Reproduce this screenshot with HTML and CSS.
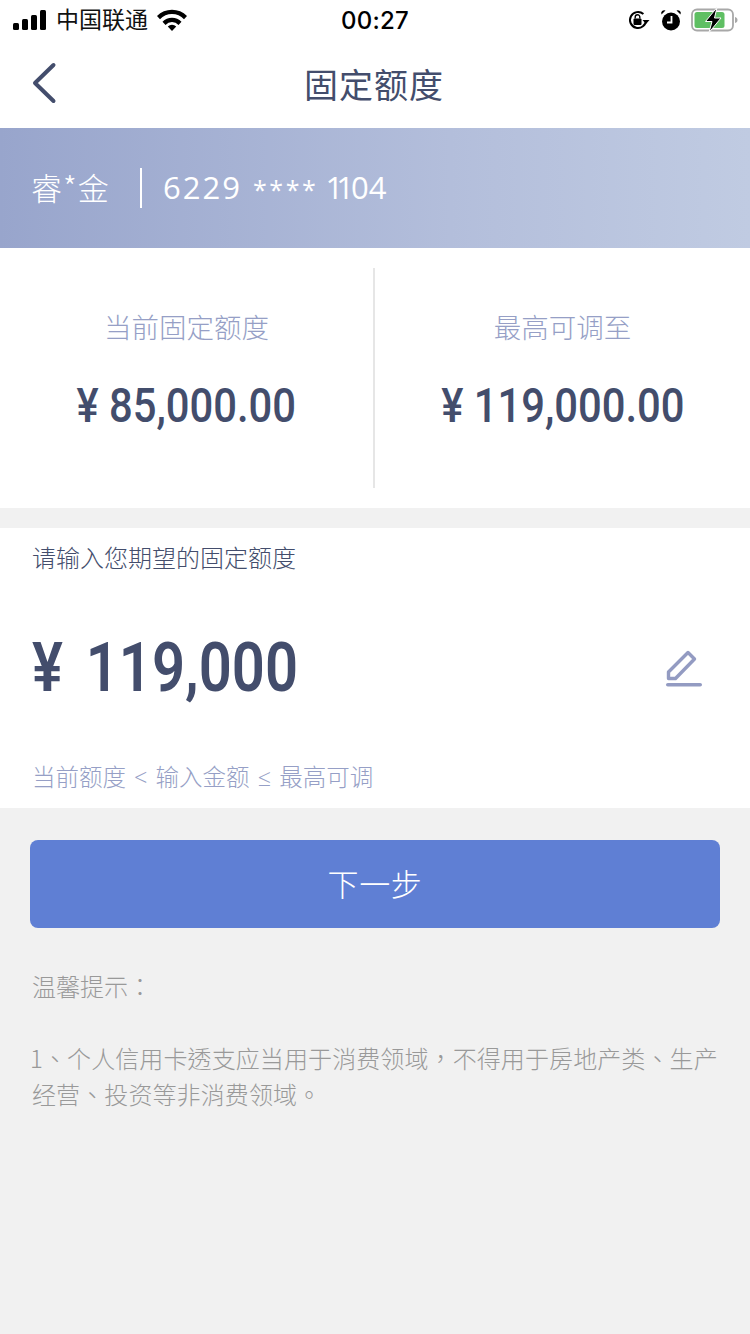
FILE: index.html
```html
<!DOCTYPE html>
<html lang="zh-CN">
<head>
<meta charset="utf-8">
<title>固定额度</title>
<link rel="stylesheet" href="styles.css">
</head>
<body>
<div class="page">
  <header class="status">
    <div class="status-left">
      <svg class="signal" width="34" height="20" viewBox="0 0 34 20"><rect x="0" y="13" width="6" height="7" rx="1.5"/><rect x="9" y="9" width="6" height="11" rx="1.5"/><rect x="18" y="5" width="6" height="15" rx="1.5"/><rect x="27" y="0" width="6" height="20" rx="1.5"/></svg>
      <span class="carrier">中国联通</span>
      <svg class="wifi" width="30" height="22" viewBox="0 0 30 22"><path d="M0 7a21 21 0 0 1 30 0l-3 3.200a16.500 16.500 0 0 0-24 0z"/><path d="M5.500 12.800a13 13 0 0 1 19 0l-3 3.100a8.800 8.800 0 0 0-13 0z"/><path d="M10.800 17.500a6 6 0 0 1 8.400 0L15 22z"/></svg>
    </div>
    <div class="clock">00:27</div>
    <div class="status-right">
      <svg width="24" height="22" viewBox="0 0 24 22"><path d="M19 11a8 8 0 1 1-2.600-5.900" fill="none" stroke="#000" stroke-width="2"/><path d="M15.500 11h7l-3.500 4z"/><rect x="6.500" y="9.500" width="8" height="6.500" rx="1"/><path d="M8.200 9.500V8a2.300 2.300 0 0 1 4.600 0v1.500" fill="none" stroke="#000" stroke-width="1.400"/></svg>
      <svg class="alarm" width="22" height="24" viewBox="0 0 22 24"><circle cx="11" cy="13.500" r="9"/><path d="M1.500 6.500 5.500 2.500a3 3 0 0 0-4 4zM20.500 6.500l-4-4a3 3 0 0 1 4 4z"/><path d="M11.500 8v6.500H7" fill="none" stroke="#fff" stroke-width="1.800"/></svg>
      <svg width="48" height="26" viewBox="0 0 48 26"><rect x="1" y="2.500" width="41" height="21" rx="5" fill="none" stroke="#a8a8a8" stroke-width="1.800"/><rect x="3.500" y="5" width="30" height="16" rx="2.500" fill="#5fbf63"/><path d="M44 10v6c1.800-.5 2.500-1.500 2.500-3s-.7-2.500-2.500-3z" fill="#a8a8a8"/><path d="M26 .5 14.500 14.500h6.500L18 25.500l12-14.500h-6.500z" stroke="#fff" stroke-width="1"/></svg>
    </div>
  </header>

  <nav class="nav">
    <svg class="back" width="26" height="42" viewBox="0 0 26 42"><path d="M22.500 3 4 21l18.500 18" fill="none" stroke="#434d6c" stroke-width="4" stroke-linecap="round" stroke-linejoin="round"/></svg>
    <h1 class="nav-title">固定额度</h1>
  </nav>

  <section class="card-band">
    <span class="holder">睿*金</span>
    <span class="card-no"><span class="no-digits">6229</span> <span class="no-stars">****</span> <span class="no-ones">11</span>04</span>
  </section>

  <section class="limits">
    <div class="limit">
      <div class="limit-label">当前固定额度</div>
      <div class="limit-value"><span class="din">¥ 85,000.00</span></div>
    </div>
    <div class="limit limit-split">
      <div class="limit-label">最高可调至</div>
      <div class="limit-value"><span class="din">¥ 119,000.00</span></div>
    </div>
  </section>

  <section class="entry">
    <div class="entry-label">请输入您期望的固定额度</div>
    <div class="entry-row">
      <span class="entry-amount">¥ 119,000</span>
      <svg class="edit" width="38" height="38" viewBox="0 0 38 38"><path d="M3.500 29.500V23L23 3.500l6.500 6.500L10.500 29.500z" fill="none" stroke="#939bc2" stroke-width="3.400" stroke-linejoin="round"/><rect x="1" y="34" width="36" height="3.600" rx="1.800" fill="#939bc2"/></svg>
    </div>
    <div class="entry-hint">当前额度 &lt; 输入金额 ≤ 最高可调</div>
  </section>

  <main class="lower">
    <button class="next" type="button">下一步</button>
    <p class="tip-title" lang="zh-TW">温馨提示：</p>
    <p class="tip-body" lang="zh-TW">1、个人信用卡透支应当用于消费领域，不得用于房地产类、生产经营、投资等非消费领域。</p>
  </main>
</div>
</body>
</html>
```

FILE: styles.css
```css
* { box-sizing: border-box; }

html, body { margin: 0; padding: 0; }

body {
  width: 750px;
  height: 1334px;
  overflow: hidden;
  background: #f1f1f1;
  font-family: "Noto Sans CJK SC", "Noto Sans", sans-serif;
  font-weight: 400;
}

.page { display: flex; flex-direction: column; height: 1334px; }

/* Status bar */
.status {
  height: 40px;
  background: #fff;
  display: grid;
  grid-template-columns: 1fr auto 1fr;
  align-items: center;
  padding: 0 11px 0 13px;
}
.status-left { display: flex; align-items: center; gap: 9px; }
.signal { fill: #000; }
.wifi { fill: #000; }
.carrier { font-size: 23px; line-height: 26px; height: 30px; color: #111; }
.clock { font-family: "Inter", "Roboto", sans-serif; font-size: 24px; font-weight: 500; color: #000; letter-spacing: .2px; margin-right: 2px; }
.status-right { display: flex; justify-content: flex-end; align-items: center; gap: 9px; }

/* Navigation */
.nav {
  height: 88px;
  background: #fff;
  display: flex;
  align-items: center;
  justify-content: center;
  position: relative;
}
.back { position: absolute; left: 31px; top: 22px; }
.nav-title { margin: 0; padding-right: 2px; font-size: 34px; line-height: 44px; font-weight: 400; color: #434d6c; letter-spacing: 1px; }

/* Card band */
.card-band {
  height: 120px;
  background: linear-gradient(90deg, #98a5cc 0%, #b3bedb 60%, #c0cbe2 100%);
  display: flex;
  align-items: center;
  padding-left: 31px;
  color: #fff;
}
.holder {
  font-size: 31px;
  font-weight: 300;
  width: 111px;
  height: 40px;
  line-height: 37px;
  border-right: 2px solid #fff;
  margin-right: 21px;
  letter-spacing: 1px;
  white-space: nowrap;
}
.card-no { font-family: "Open Sans", "Noto Sans", sans-serif; font-size: 31px; font-weight: 400; margin-top: -2px; white-space: pre; }
.no-digits { letter-spacing: 2px; }
.no-stars { font-size: 25px; letter-spacing: 2.600px; margin: 0 -1px 0 3px; }
.no-ones { letter-spacing: -7px; margin-right: 4px; }

/* Limit columns */
.limits {
  height: 260px;
  background: #fff;
  display: grid;
  grid-template-columns: 373px 377px;
  padding: 20px 0;
}
.limit { text-align: center; padding-top: 38px; height: 220px; }
.limit-split { border-left: 2px solid #e6e6e6; }
.limit-label { font-size: 27.500px; line-height: 40px; color: #969fc6; font-weight: 300; }
.limit-value {
  margin-top: 25px;
  font-size: 48px;
  line-height: 60px;
  color: #434d6c;
}
.din {
  display: inline-block;
  font-family: "Roboto", sans-serif;
  font-weight: 500;
  transform: scaleX(.87);
  white-space: nowrap;
}

/* Amount entry */
.entry { margin-top: 20px; height: 280px; background: #fff; padding: 0 32px; display: flex; flex-direction: column; }
.entry-label { font-size: 24px; line-height: 58px; color: #434d6c; height: 60px; font-weight: 300; }
.entry-row { height: 160px; display: flex; align-items: center; justify-content: space-between; padding-right: 15px; }
.entry-amount {
  display: inline-block;
  font-family: "Roboto", sans-serif;
  font-size: 69px;
  line-height: 80px;
  font-weight: 600;
  word-spacing: 10px;
  color: #434d6c;
  white-space: nowrap;
  transform: scaleX(.84);
  transform-origin: left center;
}
.edit { display: block; }
.entry-hint {
  font-family: "Open Sans", "Noto Sans CJK SC", sans-serif;
  font-size: 23.500px;
  line-height: 58px;
  height: 60px;
  color: #969fc6;
  font-weight: 300;
  word-spacing: 2px;
}

/* Button and notes */
.lower { flex: 1; padding: 32px 30px 0; }
.next {
  display: block;
  width: 100%;
  height: 88px;
  border: 0;
  border-radius: 8px;
  padding: 0 0 3px;
  background: #5f7fd4;
  color: #fff;
  font: inherit;
  font-size: 31px;
  font-weight: 300;
  letter-spacing: .6px;
}
.tip-title, .tip-body {
  font-family: "Noto Sans CJK TC", "Noto Sans CJK SC", sans-serif;
  font-size: 24px;
  font-weight: 300;
  color: #999;
  padding-left: 2px;
}
.tip-title { margin: 38px 0 0; line-height: 40px; }
.tip-body { margin: 34px 0 0; line-height: 36px; letter-spacing: .1px; text-indent: -2px; }
```
